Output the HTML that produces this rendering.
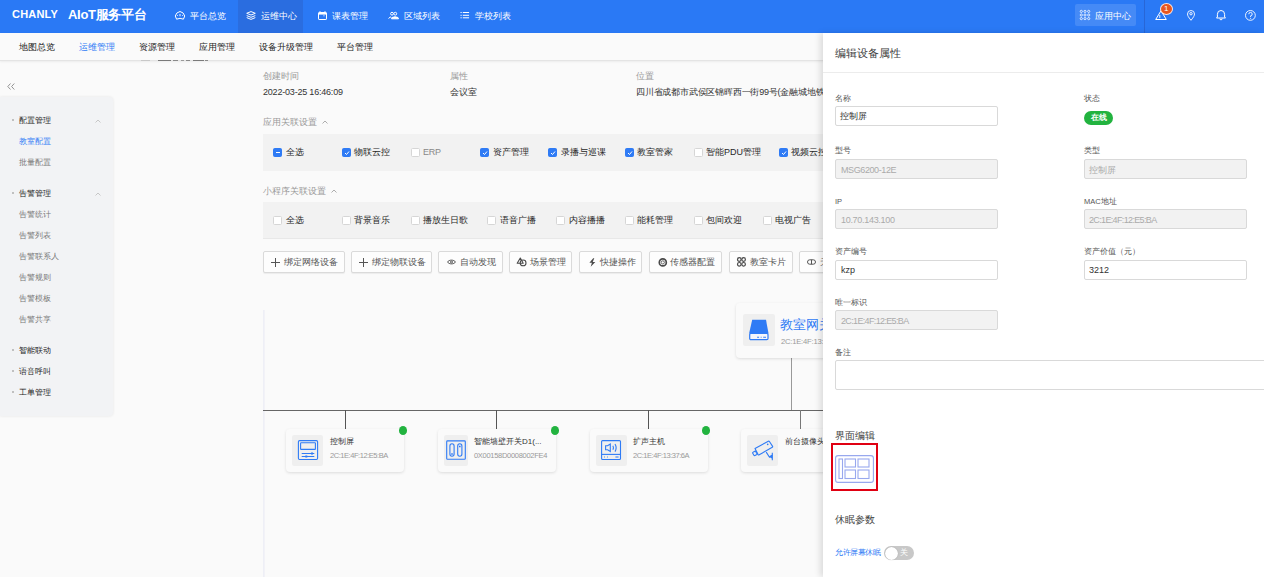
<!DOCTYPE html>
<html><head><meta charset="utf-8">
<style>
*{box-sizing:border-box;margin:0;padding:0}
html,body{width:1264px;height:577px;overflow:hidden;background:#fafafa;font-family:"Liberation Sans",sans-serif;color:#333}
.t{position:absolute;white-space:nowrap;line-height:1}
.abs{position:absolute}
svg{position:absolute;overflow:visible}
#hdr{position:absolute;left:0;top:0;width:1264px;height:33px;background:#2a79f5}
#hdr .t{color:#fff}
#sub{position:absolute;left:0;top:33px;width:1264px;height:28px;background:#fafafa;border-bottom:1px solid #e4e4e4;box-shadow:0 1px 2px rgba(0,0,0,.06)}
#side{position:absolute;left:0;top:97px;width:113px;height:319px;background:#f2f3f5;border-radius:0 4px 4px 0;box-shadow:0 0 3px rgba(0,0,0,.09)}
.s1{font-size:8.3px;color:#222}
.s2{font-size:8.3px;color:#777}
.dot{position:absolute;left:12px;width:2px;height:2px;background:#c0c0c0}
.panel{position:absolute;left:263px;width:560px;height:36px;background:#f2f2f2}
.cb{position:absolute;width:9px;height:9px;border:1px solid #d6d6d6;background:#fff;border-radius:1.5px}
.cb.on{background:#2f7bf5;border-color:#2f7bf5}
.c9{font-size:9px;color:#282828}
.btn{position:absolute;top:251px;height:22px;border:1px solid #dadada;background:#fdfdfd;border-radius:2px;box-shadow:0 1px 1px rgba(0,0,0,.06)}
.card{position:absolute;top:429px;width:118px;height:43px;background:#fafafa;border-radius:4px;box-shadow:0 1px 3px rgba(0,0,0,.12)}
.ibg{position:absolute;left:6px;top:6px;width:31px;height:31px;background:#efefef;border-radius:2px}
.gdot{position:absolute;width:8.3px;height:9px;border-radius:50%;background:#22b33f}
#drawer{position:absolute;left:823px;top:33px;width:441px;height:544px;background:#fff;box-shadow:-3px 0 6px rgba(0,0,0,.12)}
.lbl{font-size:7.5px;color:#555}
.inp{position:absolute;height:20px;border:1px solid #d9d9d9;border-radius:2px;background:#fff}
.inp.dis{background:#f2f2f2}
.iv{font-size:9px;color:#333}
.iv.g{color:#aaa}
</style></head><body>

<!-- HEADER -->
<div id="hdr">
  <div class="t" style="left:12px;top:9px;font-size:11px;font-weight:bold;letter-spacing:0.2px">CHANLY</div>
  <div class="t" style="left:68px;top:8px;font-size:13px;font-weight:bold;letter-spacing:-0.3px">AIoT服务平台</div>
  <div class="abs" style="left:238px;top:0;width:65px;height:33px;background:#2a6de0"></div>
  <!-- nav icons -->
  <svg style="left:175px;top:11px" width="10" height="9" viewBox="0 0 10 9" fill="none" stroke="#fff" stroke-width="1"><path d="M1.6 8.2 A4.5 4.5 0 1 1 8.4 8.2 Q5 6.4 1.6 8.2Z"/><path d="M5 5.2 V3" /><circle cx="2.4" cy="4.6" r="0.5" fill="#fff" stroke="none"/><circle cx="7.6" cy="4.6" r="0.5" fill="#fff" stroke="none"/></svg>
  <div class="t" style="left:190px;top:12px;font-size:9px">平台总览</div>
  <svg style="left:246px;top:11px" width="10" height="9" viewBox="0 0 10 9" fill="none" stroke="#fff" stroke-width="1"><path d="M5 0.6 L9.3 2.3 L5 4 L0.7 2.3Z"/><path d="M0.7 4.6 L5 6.3 L9.3 4.6"/><path d="M0.7 6.6 L5 8.4 L9.3 6.6"/></svg>
  <div class="t" style="left:261px;top:12px;font-size:9px">运维中心</div>
  <svg style="left:318px;top:11px" width="9" height="9" viewBox="0 0 9 9" fill="none" stroke="#fff" stroke-width="1"><rect x="0.5" y="1.5" width="8" height="7" rx="0.6"/><path d="M0.5 2.8h8" stroke-width="1.6"/><path d="M2 0.2v1.3M7 0.2v1.3"/><path d="M5.2 4.8h1.5" stroke-width="0.7"/></svg>
  <div class="t" style="left:332px;top:12px;font-size:9px">课表管理</div>
  <svg style="left:388px;top:11px" width="11" height="9" viewBox="0 0 11 9" fill="none" stroke="#fff" stroke-width="1"><circle cx="4" cy="2.7" r="1.4"/><circle cx="7.3" cy="2.7" r="1.4"/><path d="M3.5 7.8 H10.5 L10 6.5 Q7 5 4 6.5 Z" fill="#fff"/><path d="M0.5 7.5 L2.5 5.8 L3 6.8"/></svg>
  <div class="t" style="left:404px;top:12px;font-size:9px">区域列表</div>
  <svg style="left:460px;top:11px" width="10" height="9" viewBox="0 0 10 9" fill="none" stroke="#fff" stroke-width="1"><path d="M0.5 1.5h1.2M0.5 4.3h1.2M0.5 6.8h1.2M2.8 1.5h6.3M2.8 4.3h6.3M2.8 6.8h6.3"/></svg>
  <div class="t" style="left:475px;top:12px;font-size:9px">学校列表</div>

  <!-- right -->
  <div class="abs" style="left:1075px;top:4px;width:61px;height:22px;background:rgba(255,255,255,.13);border-radius:2px"></div>
  <svg style="left:1080px;top:10px" width="10" height="10" viewBox="0 0 10 10" fill="none" stroke="#fff" stroke-width="0.8"><circle cx="1.3" cy="1.4" r="1.1"/><circle cx="1.3" cy="5" r="1.1"/><circle cx="1.3" cy="8.6" r="1.1"/><circle cx="5" cy="1.4" r="1.1"/><circle cx="5" cy="5" r="1.1"/><circle cx="5" cy="8.6" r="1.1"/><circle cx="8.7" cy="1.4" r="1.1"/><circle cx="8.7" cy="5" r="1.1"/><circle cx="8.7" cy="8.6" r="1.1"/></svg>
  <div class="t" style="left:1095px;top:12px;font-size:9px">应用中心</div>
  <div class="abs" style="left:1144px;top:0;width:1px;height:33px;background:#2866d6"></div>
  <svg style="left:1155px;top:10px" width="12" height="10" viewBox="0 0 12 10" fill="none" stroke="#fff" stroke-width="1"><path d="M6 0.8 L11.3 9.5 H0.7 Z"/><path d="M4.8 5v3" stroke-width="0.9"/></svg>
  <div class="abs" style="left:1160px;top:3px;width:13px;height:12px;border-radius:50%;background:#e8561f;border:1px solid rgba(255,255,255,.85)"></div>
  <div class="t" style="left:1164px;top:5px;font-size:8px;color:#fff">1</div>
  <svg style="left:1187px;top:10px" width="8" height="11" viewBox="0 0 8 11" fill="none" stroke="#fff" stroke-width="0.9"><path d="M4 10.3 C1.3 7 0.5 5.5 0.5 4 A3.5 3.5 0 0 1 7.5 4 C7.5 5.5 6.7 7 4 10.3Z"/><circle cx="4" cy="3.7" r="1.2"/></svg>
  <svg style="left:1216px;top:10px" width="10" height="11" viewBox="0 0 10 11" fill="none" stroke="#fff" stroke-width="1"><path d="M0.5 8 H9.5 L8.6 7 V4.3 A3.6 3.8 0 0 0 1.4 4.3 V7 Z"/><path d="M3.8 8.6 A1.2 1.2 0 0 0 6.2 8.6"/></svg>
  <svg style="left:1245px;top:10px" width="11" height="11" viewBox="0 0 11 11" fill="none" stroke="#fff" stroke-width="0.9"><circle cx="5.4" cy="5.4" r="4.9"/><path d="M3.8 4.2 A1.7 1.7 0 1 1 5.6 5.8 V7"/><path d="M5.6 7.9v0.9"/></svg>
</div>

<!-- SUBNAV -->
<div id="sub">
  <div class="t" style="left:19px;top:10px;font-size:9px;color:#222">地图总览</div>
  <div class="t" style="left:79px;top:10px;font-size:9px;color:#2f7bf5">运维管理</div>
  <div class="t" style="left:139px;top:10px;font-size:9px;color:#222">资源管理</div>
  <div class="t" style="left:199px;top:10px;font-size:9px;color:#222">应用管理</div>
  <div class="t" style="left:259px;top:10px;font-size:9px;color:#222">设备升级管理</div>
  <div class="t" style="left:337px;top:10px;font-size:9px;color:#222">平台管理</div>
</div>

<!-- residual clipped content -->
<div class="abs" style="left:141px;top:60px;width:9px;height:1px;background:#c8c8c8"></div>
<div class="abs" style="left:158px;top:60px;width:13px;height:1px;background:#7a7a7a"></div>
<div class="abs" style="left:173px;top:60px;width:5px;height:1px;background:#8a8a8a"></div>
<div class="abs" style="left:181px;top:60px;width:3px;height:1px;background:#9a9a9a"></div>
<div class="abs" style="left:186px;top:60px;width:4px;height:1px;background:#8a8a8a"></div>
<div class="abs" style="left:193px;top:60px;width:11px;height:1px;background:#7a7a7a"></div>
<div class="abs" style="left:205px;top:60px;width:3px;height:1px;background:#8a8a8a"></div>
<!-- SIDEBAR -->
<svg style="left:7px;top:83px" width="8" height="7" viewBox="0 0 8 7" fill="none" stroke="#888" stroke-width="0.9"><path d="M3.5 0.5 L0.8 3.5 L3.5 6.5M7.3 0.5 L4.6 3.5 L7.3 6.5"/></svg>
<div id="side"></div>
<div class="dot" style="top:119px"></div>
<div class="t s1" style="left:19px;top:116px">配置管理</div>
<svg style="left:95px;top:119px" width="6" height="4" viewBox="0 0 6 4" fill="none" stroke="#bbb" stroke-width="0.8"><path d="M0.5 3.5 L3 1 L5.5 3.5"/></svg>
<div class="t s2" style="left:19px;top:137px;color:#2f7bf5">教室配置</div>
<div class="t s2" style="left:19px;top:158px">批量配置</div>
<div class="dot" style="top:192px"></div>
<div class="t s1" style="left:19px;top:189px">告警管理</div>
<svg style="left:95px;top:192px" width="6" height="4" viewBox="0 0 6 4" fill="none" stroke="#bbb" stroke-width="0.8"><path d="M0.5 3.5 L3 1 L5.5 3.5"/></svg>
<div class="t s2" style="left:19px;top:210px">告警统计</div>
<div class="t s2" style="left:19px;top:231px">告警列表</div>
<div class="t s2" style="left:19px;top:252px">告警联系人</div>
<div class="t s2" style="left:19px;top:273px">告警规则</div>
<div class="t s2" style="left:19px;top:294px">告警模板</div>
<div class="t s2" style="left:19px;top:315px">告警共享</div>
<div class="dot" style="top:349px"></div>
<div class="t s1" style="left:19px;top:346px">智能联动</div>
<div class="dot" style="top:370px"></div>
<div class="t s1" style="left:19px;top:367px">语音呼叫</div>
<div class="dot" style="top:391px"></div>
<div class="t s1" style="left:19px;top:388px">工单管理</div>

<!-- CONTENT -->
<div class="t" style="left:263px;top:72px;font-size:9px;color:#999">创建时间</div>
<div class="t" style="left:263px;top:88px;font-size:9px;color:#333;letter-spacing:-0.2px">2022-03-25 16:46:09</div>
<div class="t" style="left:450px;top:72px;font-size:9px;color:#999">属性</div>
<div class="t" style="left:450px;top:88px;font-size:9px;color:#333">会议室</div>
<div class="t" style="left:636px;top:72px;font-size:9px;color:#999">位置</div>
<div class="t" style="left:636px;top:88px;font-size:9px;color:#333;letter-spacing:-0.2px">四川省成都市武侯区锦晖西一街99号(金融城地铁站</div>

<div class="t" style="left:263px;top:118px;font-size:9px;color:#999">应用关联设置</div>
<svg style="left:322px;top:120px" width="6" height="4" viewBox="0 0 6 4" fill="none" stroke="#999" stroke-width="0.8"><path d="M0.5 3.5 L3 1 L5.5 3.5"/></svg>
<div class="panel" style="top:134px;height:37px"></div>
<div class="cb on" style="left:273px;top:148px"><div class="abs" style="left:2px;top:3px;width:4px;height:1px;background:#fff"></div></div>
<div class="t c9" style="left:286px;top:148px">全选</div>
<div class="cb on" style="left:342px;top:148px"><svg style="left:1px;top:1px" width="6" height="6" viewBox="0 0 6 6" fill="none" stroke="#fff" stroke-width="1"><path d="M1 3 L2.5 4.5 L5 1.5"/></svg></div>
<div class="t c9" style="left:354px;top:148px">物联云控</div>
<div class="cb" style="left:411px;top:148px"></div>
<div class="t c9" style="left:423px;top:148px;color:#888;letter-spacing:-0.3px">ERP</div>
<div class="cb on" style="left:480px;top:148px"><svg style="left:1px;top:1px" width="6" height="6" viewBox="0 0 6 6" fill="none" stroke="#fff" stroke-width="1"><path d="M1 3 L2.5 4.5 L5 1.5"/></svg></div>
<div class="t c9" style="left:493px;top:148px">资产管理</div>
<div class="cb on" style="left:548px;top:148px"><svg style="left:1px;top:1px" width="6" height="6" viewBox="0 0 6 6" fill="none" stroke="#fff" stroke-width="1"><path d="M1 3 L2.5 4.5 L5 1.5"/></svg></div>
<div class="t c9" style="left:561px;top:148px">录播与巡课</div>
<div class="cb on" style="left:625px;top:148px"><svg style="left:1px;top:1px" width="6" height="6" viewBox="0 0 6 6" fill="none" stroke="#fff" stroke-width="1"><path d="M1 3 L2.5 4.5 L5 1.5"/></svg></div>
<div class="t c9" style="left:637px;top:148px">教室管家</div>
<div class="cb" style="left:694px;top:148px"></div>
<div class="t c9" style="left:706px;top:148px">智能PDU管理</div>
<div class="cb on" style="left:779px;top:148px"><svg style="left:1px;top:1px" width="6" height="6" viewBox="0 0 6 6" fill="none" stroke="#fff" stroke-width="1"><path d="M1 3 L2.5 4.5 L5 1.5"/></svg></div>
<div class="t c9" style="left:791px;top:148px">视频云控</div>

<div class="t" style="left:263px;top:187px;font-size:9px;color:#999">小程序关联设置</div>
<svg style="left:331px;top:189px" width="6" height="4" viewBox="0 0 6 4" fill="none" stroke="#999" stroke-width="0.8"><path d="M0.5 3.5 L3 1 L5.5 3.5"/></svg>
<div class="panel" style="top:202px;height:37px;border-bottom:1px solid #e8e8e8"></div>
<div class="cb" style="left:273px;top:216px"></div><div class="t c9" style="left:286px;top:216px">全选</div>
<div class="cb" style="left:342px;top:216px"></div><div class="t c9" style="left:354px;top:216px">背景音乐</div>
<div class="cb" style="left:411px;top:216px"></div><div class="t c9" style="left:423px;top:216px">播放生日歌</div>
<div class="cb" style="left:487px;top:216px"></div><div class="t c9" style="left:500px;top:216px">语音广播</div>
<div class="cb" style="left:556px;top:216px"></div><div class="t c9" style="left:569px;top:216px">内容播播</div>
<div class="cb" style="left:625px;top:216px"></div><div class="t c9" style="left:637px;top:216px">能耗管理</div>
<div class="cb" style="left:694px;top:216px"></div><div class="t c9" style="left:706px;top:216px">包间欢迎</div>
<div class="cb" style="left:763px;top:216px"></div><div class="t c9" style="left:775px;top:216px">电视广告</div>

<!-- buttons -->
<div class="btn" style="left:263px;width:82px"></div>
<svg style="left:271px;top:257.5px" width="9" height="9" viewBox="0 0 9 9" stroke="#555" stroke-width="1"><path d="M4.5 0v9M0 4.5h9"/></svg>
<div class="t c9" style="left:284px;top:258px;color:#555">绑定网络设备</div>
<div class="btn" style="left:351px;width:81px"></div>
<svg style="left:359px;top:257.5px" width="9" height="9" viewBox="0 0 9 9" stroke="#555" stroke-width="1"><path d="M4.5 0v9M0 4.5h9"/></svg>
<div class="t c9" style="left:372px;top:258px;color:#555">绑定物联设备</div>
<div class="btn" style="left:438px;width:65px"></div>
<svg style="left:447px;top:259px" width="9" height="6" viewBox="0 0 9 6" fill="none" stroke="#555" stroke-width="1"><path d="M0.5 3 C2 0.5 7 0.5 8.5 3 C7 5.5 2 5.5 0.5 3Z"/><circle cx="4.5" cy="3" r="1"/></svg>
<div class="t c9" style="left:460px;top:258px;color:#555">自动发现</div>
<div class="btn" style="left:509px;width:63px"></div>
<svg style="left:516px;top:257px" width="11" height="10" viewBox="0 0 11 10" fill="none" stroke="#4a4a4a" stroke-width="1.1" stroke-linejoin="round"><path d="M4.3 1 L7.2 6.2 H1.2 Z"/><circle cx="7.1" cy="5.9" r="2.9"/></svg>
<div class="t c9" style="left:530px;top:258px;color:#555">场景管理</div>
<div class="btn" style="left:579px;width:63px"></div>
<svg style="left:589px;top:257.5px" width="7" height="9" viewBox="0 0 7 9" fill="#4a4a4a"><path d="M4.2 0.2 L0.4 4.8 H2.9 L1.7 8.8 L6.3 3.9 H3.7 L5.3 0.2Z"/></svg>
<div class="t c9" style="left:600px;top:258px;color:#555">快捷操作</div>
<div class="btn" style="left:649px;width:73px"></div>
<svg style="left:657.5px;top:257.5px" width="10" height="9" viewBox="0 0 10 9" fill="none" stroke="#4a4a4a"><circle cx="4.8" cy="4.4" r="3.5" stroke-width="1.7"/><circle cx="4.8" cy="4.4" r="1.6" stroke-width="0.8"/></svg>
<div class="t c9" style="left:670px;top:258px;color:#555">传感器配置</div>
<div class="btn" style="left:729px;width:64px"></div>
<svg style="left:737px;top:257px" width="9" height="10" viewBox="0 0 9 10" fill="none" stroke="#4a4a4a" stroke-width="1.2"><circle cx="2.3" cy="2.5" r="1.8"/><circle cx="6.6" cy="2.5" r="1.8"/><circle cx="2.3" cy="7.3" r="1.8"/><circle cx="6.6" cy="7.3" r="1.8"/></svg>
<div class="t c9" style="left:750px;top:258px;color:#555">教室卡片</div>
<div class="btn" style="left:799px;width:64px"></div>
<svg style="left:807px;top:259px" width="9" height="6" viewBox="0 0 9 6" fill="none" stroke="#555" stroke-width="1"><rect x="0.5" y="0.8" width="8" height="4.4" rx="2.2"/><path d="M4.5 0.8v4.4"/></svg>
<div class="t c9" style="left:820px;top:258px;color:#555">天线</div>

<!-- topology -->
<div class="abs" style="left:263px;top:310px;width:2px;height:267px;background:linear-gradient(90deg,#ecedf5,#f4f4f8)"></div>
<div class="abs" style="left:263px;top:410px;width:560px;height:1px;background:#666"></div>
<div class="abs" style="left:791px;top:357px;width:1px;height:53px;background:#999"></div>
<div class="abs" style="left:345px;top:410px;width:1px;height:19px;background:#555"></div>
<div class="abs" style="left:496px;top:410px;width:1px;height:19px;background:#555"></div>
<div class="abs" style="left:648px;top:410px;width:1px;height:19px;background:#555"></div>
<div class="abs" style="left:800px;top:410px;width:1px;height:19px;background:#777"></div>

<div class="card" style="left:736px;top:303px;width:140px;height:55px;background:#fafafa"></div>
<div class="abs" style="left:743px;top:314px;width:32px;height:32px;background:#efefef;border-radius:2px"></div>
<svg style="left:743px;top:314px" width="31" height="31" viewBox="0 0 31 31"><path d="M9.2 5.8 H23 L25.5 19.6 H6.1 Z" fill="#2f7bf5"/><rect x="6.7" y="19.4" width="18.3" height="6.2" rx="1.2" fill="#f4f6fb" stroke="#2f7bf5" stroke-width="1.2"/><path d="M14.1 23.2h2M17.7 23.2h0.9M20.2 23.2h2.8" stroke="#2f7bf5" stroke-width="1.1"/></svg>
<div class="t" style="left:780px;top:318px;font-size:13px;color:#2f7bf5">教室网关</div>
<div class="t" style="left:781px;top:338px;font-size:7.6px;color:#999;letter-spacing:-0.2px">2C:1E:4F:13:2A:5B</div>

<div class="card" style="left:286px"><div class="ibg"></div></div>
<svg style="left:292px;top:435px" width="31" height="31" viewBox="0 0 31 31" fill="none" stroke="#2f7bf5" stroke-width="1.1"><rect x="6.4" y="5.6" width="19.2" height="18.9" rx="1.2"/><rect x="8.6" y="7.8" width="14.8" height="6.6" rx="0.5"/><path d="M9.7 18.5H22.3M9.7 21.5H22.3"/><path d="M19 18.5h2M13.3 21.5h2" stroke-width="2"/></svg>
<div class="t" style="left:330px;top:438px;font-size:8px;color:#333">控制屏</div>
<div class="t" style="left:330px;top:452px;font-size:7.5px;color:#999;letter-spacing:-0.45px">2C:1E:4F:12:E5:BA</div>
<div class="gdot" style="left:399px;top:426px"></div>

<div class="card" style="left:438px"><div class="ibg" style="width:24px"></div></div>
<svg style="left:443px;top:435px" width="31" height="31" viewBox="0 0 31 31" fill="none" stroke="#2f7bf5" stroke-width="1.1"><rect x="3.7" y="5.9" width="18.6" height="18.3" rx="0.8"/><rect x="6.9" y="8.8" width="4.2" height="12.4" rx="2.1"/><rect x="14.7" y="8.8" width="4.2" height="12.4" rx="2.1"/><path d="M8.2 19h1.6M16 11.5h1.6" stroke-width="1.3"/></svg>
<div class="t" style="left:474px;top:438px;font-size:8px;color:#333">智能墙壁开关D1(...</div>
<div class="t" style="left:474px;top:452px;font-size:7.5px;color:#999;letter-spacing:-0.3px">0X00158D0008002FE4</div>
<div class="gdot" style="left:551px;top:426px"></div>

<div class="card" style="left:590px"><div class="ibg"></div></div>
<svg style="left:596px;top:435px" width="31" height="31" viewBox="0 0 31 31" fill="none" stroke="#2f7bf5" stroke-width="1.1"><rect x="5.6" y="5.6" width="18.9" height="18.9" rx="1"/><path d="M5.6 19.4H24.5"/><path d="M9.6 10.8 H11.6 L14.3 9 V16.5 L11.6 14.7 H9.6 Z"/><path d="M16.9 10.8 Q18 12.8 16.9 14.8M19 9 Q21.3 12.8 19 16.6"/><path d="M8 22h0.8M11 22h0.8M19.4 22h3.2" stroke-width="1.2"/></svg>
<div class="t" style="left:633px;top:438px;font-size:8px;color:#333">扩声主机</div>
<div class="t" style="left:633px;top:452px;font-size:7.5px;color:#999;letter-spacing:-0.45px">2C:1E:4F:13:37:6A</div>
<div class="gdot" style="left:702px;top:426px"></div>

<div class="card" style="left:741px"><div class="ibg"></div></div>
<svg style="left:747px;top:435px" width="31" height="31" viewBox="0 0 31 31" fill="none" stroke="#2f7bf5" stroke-width="1.1" stroke-linejoin="round"><path d="M8 13.6 L21.3 6.2 Q22 5.9 22.4 6.5 L25.6 11.4 Q25.9 12 25.3 12.3 L12.2 19.8 Q11.5 20.2 11.1 19.6 Z"/><path d="M6 17.2 L8.3 15.9 L10.3 19.2 L8 20.5 Q7.3 20.8 6.9 20.2 L5.6 18 Q5.4 17.5 6 17.2Z"/><path d="M19.2 17.1 L22.5 22.2 L25.3 20.4"/><path d="M25.3 17.8 V25.3"/><path d="M21.8 21.6 L25.3 19.5 V23.8 Z" fill="#2f7bf5" stroke="none"/><circle cx="20.7" cy="9.4" r="0.8" fill="#2f7bf5" stroke="none"/></svg>
<div class="t" style="left:785px;top:438px;font-size:8px;color:#333">前台摄像头</div>

<!-- DRAWER -->
<div id="drawer">
  <div class="t" style="left:12px;top:15px;font-size:10.9px;color:#3a3a3a">编辑设备属性</div>
  <div class="abs" style="left:0;top:39px;width:441px;height:1px;background:#ececec"></div>

  <div class="t lbl" style="left:12px;top:62px">名称</div>
  <div class="inp" style="left:12px;top:73px;width:163px"></div>
  <div class="t iv" style="left:17px;top:79px">控制屏</div>
  <div class="t lbl" style="left:261px;top:62px">状态</div>
  <div class="abs" style="left:261px;top:78px;width:29px;height:14px;border-radius:7px;background:#22b33f"></div>
  <div class="t" style="left:268px;top:81px;font-size:7.5px;color:#fff;font-weight:bold">在线</div>

  <div class="t lbl" style="left:12px;top:114px">型号</div>
  <div class="inp dis" style="left:12px;top:126px;width:163px"></div>
  <div class="t iv g" style="left:18px;top:133px;letter-spacing:-0.4px">MSG6200-12E</div>
  <div class="t lbl" style="left:261px;top:114px">类型</div>
  <div class="inp dis" style="left:261px;top:126px;width:163px"></div>
  <div class="t iv g" style="left:266px;top:133px">控制屏</div>

  <div class="t lbl" style="left:12px;top:165px">IP</div>
  <div class="inp dis" style="left:12px;top:176px;width:163px"></div>
  <div class="t iv g" style="left:18px;top:183px;letter-spacing:-0.3px">10.70.143.100</div>
  <div class="t lbl" style="left:261px;top:165px">MAC地址</div>
  <div class="inp dis" style="left:261px;top:176px;width:163px"></div>
  <div class="t iv g" style="left:266px;top:183px;letter-spacing:-0.65px">2C:1E:4F:12:E5:BA</div>

  <div class="t lbl" style="left:12px;top:215px">资产编号</div>
  <div class="inp" style="left:12px;top:227px;width:163px"></div>
  <div class="t iv" style="left:18px;top:233px">kzp</div>
  <div class="t lbl" style="left:261px;top:215px">资产价值（元）</div>
  <div class="inp" style="left:261px;top:227px;width:163px"></div>
  <div class="t iv" style="left:266px;top:233px">3212</div>

  <div class="t lbl" style="left:12px;top:266px">唯一标识</div>
  <div class="inp dis" style="left:12px;top:277px;width:163px"></div>
  <div class="t iv g" style="left:18px;top:284px;letter-spacing:-0.65px">2C:1E:4F:12:E5:BA</div>

  <div class="t lbl" style="left:12px;top:316px">备注</div>
  <div class="inp" style="left:12px;top:327px;width:460px;height:30px"></div>

  <div class="t" style="left:12px;top:398px;font-size:9.6px;color:#444">界面编辑</div>
  <div class="abs" style="left:8px;top:410px;width:47px;height:48px;border:2px solid #e00012"></div>
  <svg style="left:12px;top:422px" width="39" height="28" viewBox="0 0 39 28" fill="none" stroke="#98a8ee" stroke-width="1.1"><rect x="0.6" y="0.6" width="37.8" height="26.8" rx="2.5"/><rect x="4" y="4" width="3.5" height="19.5"/><rect x="10" y="4" width="10.5" height="8"/><rect x="23" y="4" width="11" height="8"/><rect x="10" y="15" width="10.5" height="8.5"/><rect x="23" y="15" width="11" height="8.5"/></svg>

  <div class="t" style="left:12px;top:482px;font-size:9.6px;color:#444">休眠参数</div>
  <div class="t" style="left:12px;top:516px;font-size:7.6px;color:#2f7bf5;letter-spacing:-0.45px">允许屏幕休眠</div>
  <div class="abs" style="left:61px;top:513px;width:30px;height:14px;border-radius:7px;background:#c8c8c8"></div>
  <div class="abs" style="left:62px;top:513.5px;width:13px;height:13px;border-radius:50%;background:#fff;box-shadow:0 0 1px rgba(0,0,0,.3)"></div>
  <div class="t" style="left:77px;top:516px;font-size:8px;color:#fff">关</div>
</div>

</body></html>
